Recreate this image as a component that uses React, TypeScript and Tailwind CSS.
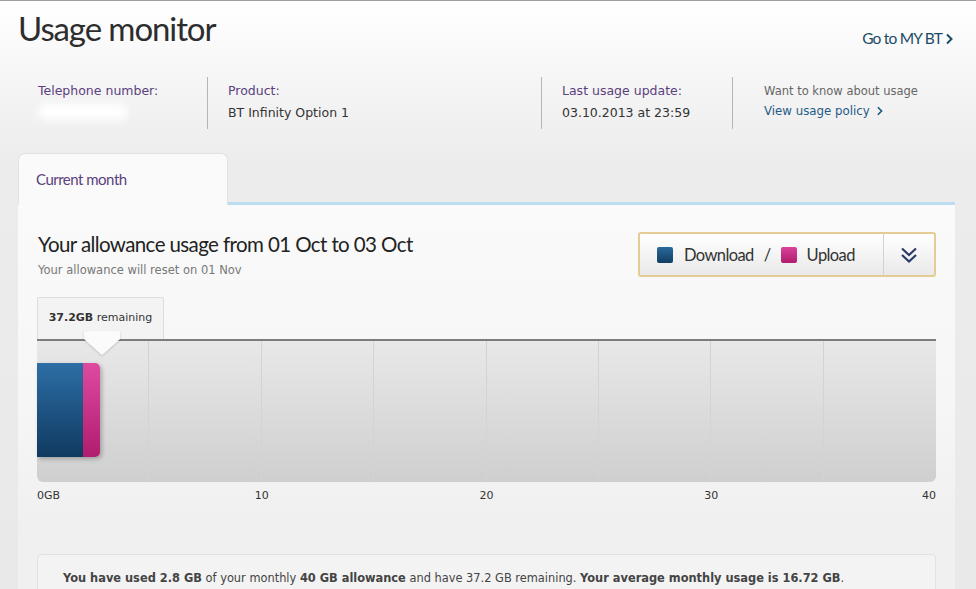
import type React from 'react';

const HEAD = "font-['Lato','Open_Sans',sans-serif]";
const BODY = "font-['DejaVu_Sans','Verdana',sans-serif]";

function Chevron({ className }: { className?: string }) {
  return (
    <svg viewBox="0 0 8 12" className={className} fill="none" stroke="currentColor" strokeWidth="2">
      <path d="M2 1.5 6.5 6 2 10.5" />
    </svg>
  );
}

function DoubleChevronDown() {
  return (
    <svg viewBox="0 0 20 20" className="h-[20px] w-[20px] text-[#2b3a66]" fill="none" stroke="currentColor" strokeWidth="2.2">
      <path d="M3 3.5 10 10 17 3.5" />
      <path d="M3 10 10 16.5 17 10" />
    </svg>
  );
}

interface InfoColProps {
  label: string;
  children: React.ReactNode;
  className?: string;
}

function InfoCol({ label, children, className }: InfoColProps) {
  return (
    <div className={`h-[52px] pt-[5px] ${className ?? ''}`}>
      <p className="text-[12.5px] leading-[18px] text-[#5b3f7e]">{label}</p>
      <div className="mt-[4px] text-[12.5px] leading-[18px] text-[#333]">{children}</div>
    </div>
  );
}

const axis = [
  { label: '0GB', span: 'col-span-1 text-left' },
  { label: '10', span: 'col-span-2 text-center' },
  { label: '20', span: 'col-span-2 text-center' },
  { label: '30', span: 'col-span-2 text-center' },
  { label: '40', span: 'col-span-1 text-right' },
];

export default function App() {
  return (
    <div className="w-[976px] h-[589px] overflow-hidden border-t border-[#9d9d9d] bg-[linear-gradient(to_bottom,#ffffff_0px,#ececec_160px,#e9e9e9_589px)]">
      <div className="flex items-start justify-between pl-[18px] pr-[23px]">
        <h1 className={`${HEAD} text-[33px] leading-[54px] tracking-[-1.1px] text-[#2d2d2d]`}>Usage monitor</h1>
        <a className={`${HEAD} mt-[26px] flex items-center gap-[3px] text-[15.5px] tracking-[-0.8px] text-[#1c4b66]`}>
          Go to MY BT
          <Chevron className="h-[12px] w-[8px]" />
        </a>
      </div>

      <div className={`${BODY} mt-[22px] flex pl-[38px]`}>
        <InfoCol label="Telephone number:" className="w-[170px] border-r border-[#b5b5b5]">
          <span className="inline-block h-[16px] w-[90px] rounded-full bg-white blur-[4px]" />
        </InfoCol>
        <InfoCol label="Product:" className="w-[334px] border-r border-[#b5b5b5] pl-[20px]">
          BT Infinity Option 1
        </InfoCol>
        <InfoCol label="Last usage update:" className="w-[191px] border-r border-[#b5b5b5] pl-[20px]">
          03.10.2013 at 23:59
        </InfoCol>
        <div className="pl-[31px] pt-[5px]">
          <p className="text-[11.5px] leading-[18px] text-[#666]">Want to know about usage</p>
          <a className="mt-[2px] flex items-center gap-[6px] text-[11.8px] leading-[18px] text-[#1f5a86]">
            View usage policy
            <Chevron className="h-[10px] w-[7px]" />
          </a>
        </div>
      </div>

      <div className="ml-[18px] mt-[24px] w-[937px]">
        <div className="flex items-end">
          <div className="flex h-[52px] w-[210px] items-center rounded-t-[7px] border border-b-0 border-[#e2e2e2] bg-[#fafafa] pl-[17px]">
            <span className={`${HEAD} text-[15px] tracking-[-0.5px] text-[#5b3f7e]`}>Current month</span>
          </div>
          <div className="h-[3px] flex-1 bg-[#bcdcf2]" />
        </div>

        <div className="bg-[linear-gradient(to_bottom,#fafafa_0px,#f6f6f6_200px,#f0f0f0_320px)] px-[19px] pb-[40px] pt-[26px]">
          <div className="flex items-start justify-between">
            <div className="pl-[1px]">
              <h2 className={`${HEAD} text-[20.5px] leading-[26px] tracking-[-0.6px] text-[#222]`}>
                Your allowance usage from 01 Oct to 03 Oct
              </h2>
              <p className={`${BODY} mt-[5px] text-[11.5px] leading-[16px] text-[#777]`}>
                Your allowance will reset on 01 Nov
              </p>
            </div>
            <div className="mt-[1px] flex h-[45px] w-[298px] items-stretch rounded-[3px] border-2 border-[#e3cd95] bg-[linear-gradient(to_bottom,#ffffff,#e9e9e9)]">
              <div className={`${HEAD} flex flex-1 items-center pl-[17px] pt-[1px] text-[16.5px] tracking-[-0.6px] text-[#333]`}>
                <span className="mr-[11px] h-[16px] w-[16px] rounded-[2px] bg-[linear-gradient(to_bottom,#2a6a9c,#123d62)]" />
                Download
                <span className="mx-[10px]">/</span>
                <span className="mr-[10px] h-[16px] w-[16px] rounded-[2px] bg-[linear-gradient(to_bottom,#d9429a,#b01d6c)]" />
                Upload
              </div>
              <div className="flex w-[51px] items-center justify-center border-l border-[#d2d2d2]">
                <DoubleChevronDown />
              </div>
            </div>
          </div>

          <div className="mt-[19px] flex">
            <div className={`${BODY} flex h-[42px] w-[127px] items-start justify-center rounded-t-[2px] border border-b-0 border-[#dcdcdc] bg-[#f3f3f3] pt-[12px] text-[11px] text-[#333]`}>
              <span>
                <b className="font-bold">37.2GB</b> remaining
              </span>
            </div>
          </div>

          <div className="relative h-[143px] rounded-b-[6px] border-t-2 border-[#7c7c7c] bg-[linear-gradient(to_bottom,#e8e8e8,#cfcfcf)]">
            <div className="grid h-full grid-cols-8">
              {Array.from({ length: 8 }).map((_, i) => (
                <div key={i} className={i < 7 ? 'border-r border-[#d3d3d3]' : ''} />
              ))}
            </div>
            <div className="absolute left-0 top-[22px] flex h-[94px] rounded-r-[5px] shadow-[2px_2px_4px_rgba(0,0,0,0.25)]">
              <div className="w-[46px] bg-[linear-gradient(to_bottom,#2d6ea6,#0f3a60)]" />
              <div className="w-[17px] rounded-r-[5px] bg-[linear-gradient(to_bottom,#de4aa0,#b01c6e)]" />
            </div>
            <svg className="absolute left-[45px] top-[-11px] h-[28px] w-[40px]" viewBox="0 0 40 28">
              <defs>
                <filter id="sh" x="-20%" y="-20%" width="140%" height="160%">
                  <feDropShadow dx="0" dy="1" stdDeviation="1" floodColor="#000" floodOpacity="0.2" />
                </filter>
              </defs>
              <path d="M4 1 H36 Q38 1 38 3 V9 L20 25 L2 9 V3 Q2 1 4 1 Z" fill="#fbfbfb" filter="url(#sh)" />
            </svg>
          </div>

          <div className={`${BODY} mt-[7px] grid grid-cols-8 text-[11px] leading-[14px] text-[#333]`}>
            {axis.map((a) => (
              <span key={a.label} className={a.span}>
                {a.label}
              </span>
            ))}
          </div>

          <div className={`${BODY} mt-[51px] rounded-[4px] border border-[#e2e2e2] bg-[#f3f3f3] pb-[15px] pl-[25px] pt-[14px] text-[11.4px] leading-[18px] text-[#444]`}>
            <b>You have used 2.8 GB</b> of your monthly <b>40 GB allowance</b> and have 37.2 GB remaining.{' '}
            <b>Your average monthly usage is 16.72 GB</b>.
          </div>
        </div>
      </div>
    </div>
  );
}
